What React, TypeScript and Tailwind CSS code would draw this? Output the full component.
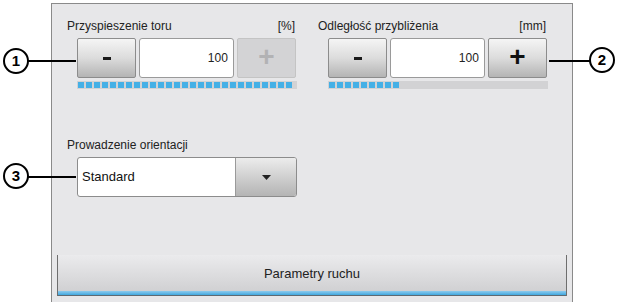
import React from 'react';

const font = { fontFamily: '"Liberation Sans", Arial, sans-serif' };

const btn =
  'flex items-center justify-center w-[60px] h-[40px] rounded-[2px] border border-[#8c8c8c] bg-linear-to-b from-[#f5f5f5] via-[#dcdcdc] to-[#b4b4b4]';

// one row of progress blocks
const Blocks = ({ filled, total }: { filled: number; total: number }) => (
  <div className="flex gap-[2px] h-[8px] bg-[#d2d2d4] w-[220px] items-center pl-[1px]">
    {Array.from({ length: total }).map((_, i) => (
      <div
        key={i}
        className={`w-[6px] h-[6px] ${i < filled ? 'bg-[#45b0e6]' : 'bg-transparent'}`}
      />
    ))}
  </div>
);

const Stepper = ({
  label,
  unit,
  filled,
  plusEnabled,
}: {
  label: string;
  unit: string;
  filled: number;
  plusEnabled: boolean;
}) => (
  <div className="flex flex-col w-[229px]">
    <div className="flex justify-between text-[12px] leading-[14px] text-[#222] pr-[1px]">
      <span>{label}</span>
      <span>{unit}</span>
    </div>
    <div className="flex flex-col gap-[3px] pl-[10px] mt-[5px]">
      <div className="flex gap-[3px]">
        <button className={btn}>
          <span className="block w-[8px] h-[3px] bg-[#1a1a1a]" />
        </button>
        <div className="flex items-center justify-end w-[96px] h-[40px] rounded-[3px] border border-[#9a9a9a] bg-white pr-[5px] text-[12px] text-[#222]">
          100
        </div>
        {plusEnabled ? (
          <button className={btn}>
            <span className="text-[28px] font-bold leading-none text-[#111] -mt-[3px]">+</span>
          </button>
        ) : (
          <button className="flex items-center justify-center w-[60px] h-[40px] rounded-[2px] border border-[#c4c4c4] bg-[#d3d3d5]">
            <span className="text-[28px] font-bold leading-none text-[#b2b2b4] -mt-[3px]">+</span>
          </button>
        )}
      </div>
      <Blocks filled={filled} total={27} />
    </div>
  </div>
);

const Callout = ({ n, className }: { n: number; className: string }) => (
  <div
    className={`absolute flex items-center justify-center w-[26px] h-[26px] rounded-full border-2 border-black bg-white text-[15px] font-bold text-black ${className}`}
  >
    {n}
  </div>
);

export default function App() {
  return (
    <div className="relative w-[623px] h-[306px] bg-white overflow-hidden" style={font}>
      <div className="ml-[51px] mt-[3px] w-[522px] h-[299px] border-t border-x border-[#8a8a8a] bg-[#e7e7e9] flex flex-col">
        <div className="flex gap-[22px] pl-[15px] pt-[15px]">
          <Stepper label="Przyspieszenie toru" unit="[%]" filled={27} plusEnabled={false} />
          <Stepper label="Odległość przybliżenia" unit="[mm]" filled={9} plusEnabled />
        </div>

        <div className="flex flex-col pl-[15px] mt-[49px]">
          <span className="text-[12px] leading-[14px] text-[#222]">Prowadzenie orientacji</span>
          <div className="flex ml-[10px] mt-[5px] w-[220px] h-[40px] rounded-[3px] border border-[#8c8c8c] bg-white overflow-hidden">
            <div className="flex-1 flex items-center pl-[4px] text-[13px] text-[#111]">Standard</div>
            <div className="flex items-center justify-center w-[61px] border-l border-[#9a9a9a] bg-linear-to-b from-[#ececec] to-[#b4b4b4]">
              <svg width="9" height="5" viewBox="0 0 9 5">
                <path d="M0 0 H9 L4.5 5 Z" fill="#222" />
              </svg>
            </div>
          </div>
        </div>

        <div className="mt-auto mx-[5px] mb-[6px] h-[41px] flex flex-col border-x border-[#6e6e6e] bg-linear-to-b from-[#ebebed] to-[#cdcdcf]">
          <div className="flex-1 flex items-center justify-center pt-[2px] text-[13px] text-[#222]">Parametry ruchu</div>
          <div className="h-[4px] bg-linear-to-b from-[#8ccbee] to-[#3ea8df]" />
          <div className="h-[1px] bg-[#5d6a73]" />
        </div>
      </div>

      {/* callouts */}
      <div className="absolute left-[28px] top-[60px] w-[48px] h-[1.5px] bg-black" />
      <Callout n={1} className="left-[3px] top-[48px]" />
      <div className="absolute left-[549px] top-[60px] w-[42px] h-[1.5px] bg-black" />
      <Callout n={2} className="left-[589px] top-[47px]" />
      <div className="absolute left-[28px] top-[176px] w-[48px] h-[1.5px] bg-black" />
      <Callout n={3} className="left-[3px] top-[163px]" />
    </div>
  );
}
